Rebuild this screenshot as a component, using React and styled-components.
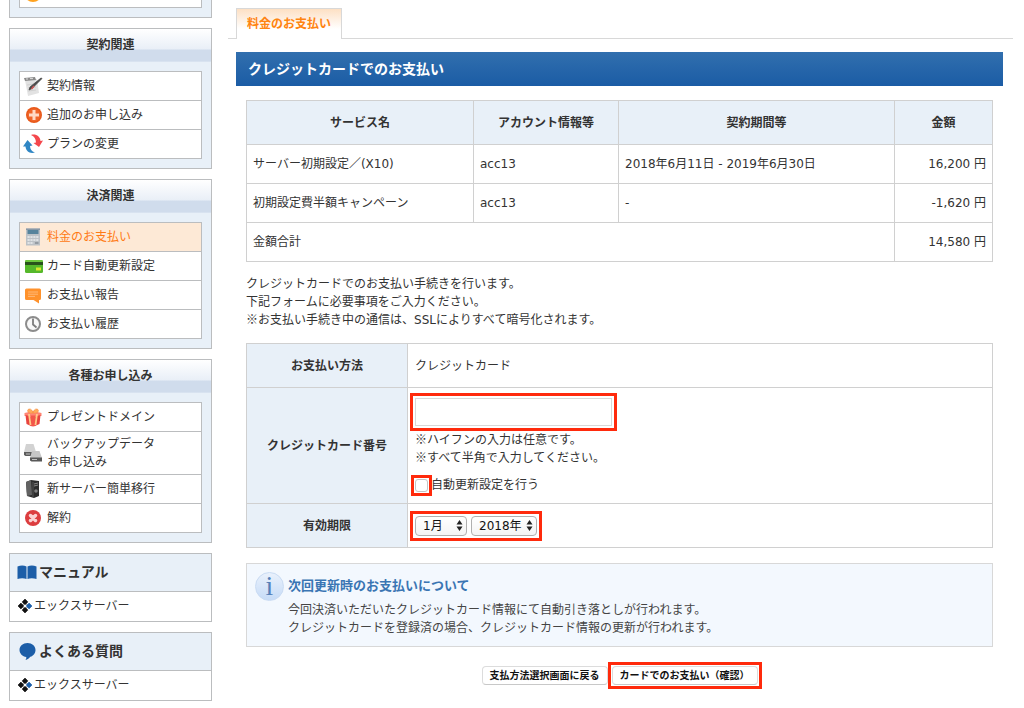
import React from "react";
import styled, { createGlobalStyle } from "styled-components";

const GlobalStyle = createGlobalStyle`
  *, *::before, *::after { box-sizing: border-box; }
  body {
    margin: 0;
    background: #fff;
    color: #333;
    font: 12px/18px "DejaVu Sans", "Noto Sans CJK JP", sans-serif;
  }
  a { color: inherit; text-decoration: none; }
  h1, h2, h3, p, ul { margin: 0; padding: 0; }
  ul { list-style: none; }
`;

const Highlight = styled.span`
  display: inline-flex;
  gap: 4px;
  margin: ${(p) => -3 - (p.$gap ?? 2)}px;
  padding: ${(p) => p.$gap ?? 2}px;
  border: 3px solid #ff2a0c;
  vertical-align: middle;
`;

const Page = styled.div`
  display: flex;
  gap: 16px;
  padding-right: 11px;
`;

/* ---------- sidebar ---------- */

const Sidebar = styled.aside`
  flex: 0 0 203px;
  display: flex;
  flex-direction: column;
  gap: 10px;
  margin-left: 9px;
`;

const Panel = styled.section`
  border: 1px solid #bbbdbf;
  background: #e8f0f8;
`;

const PanelTail = styled(Panel)`
  border-top: 0;
`;

const PanelTitle = styled.h2`
  height: 33px;
  font-size: 12px;
  line-height: 32px;
  text-align: center;
  background: linear-gradient(#ffffff 0, #e9eff7 20px, #d0dcec 21px, #d0dcec 32px, #e0e9f4 33px);
`;

const Menu = styled.ul`
  margin: 9px;
  border: 1px solid #bbbdbf;
  background: #fff;
`;

const MenuTail = styled(Menu)`
  margin-top: 0;
  border-top: 0;
`;

const MenuItem = styled.li`
  & + & { border-top: 1px solid #bbbdbf; }
`;

const MenuLink = styled.a`
  display: flex;
  align-items: center;
  gap: 4px;
  min-height: 28px;
  padding: 3px;
  color: ${(p) => (p.$active ? "#ff7a14" : "#333")};
  background: ${(p) => (p.$active ? "#fde9d6" : "#fff")};
`;

const MenuLinkTail = styled(MenuLink)`
  align-items: flex-end;
  min-height: 0;
  height: 7px;
  padding: 0 3px 4px;
  overflow: hidden;
`;

const Icon = styled.svg`
  flex: none;
  display: block;
  width: ${(p) => p.$size ?? 20}px;
  height: ${(p) => p.$size ?? 20}px;
`;

const GuideTitle = styled.h2`
  display: flex;
  align-items: center;
  gap: 2px;
  height: 37px;
  padding: 0 7px 2px;
  font-size: 14px;
  line-height: 20px;
`;

const GuideLink = styled.a`
  display: flex;
  align-items: center;
  gap: 2px;
  height: 30px;
  padding: 0 8px 2px;
  border-top: 1px solid #bbbdbf;
  background: #fff;
`;

/* ---------- main ---------- */

const Main = styled.main`
  flex: 1;
  min-width: 0;
  padding-top: 8px;
`;

const Tabs = styled.nav`
  display: flex;
  &::before, &::after {
    content: "";
    border-bottom: 1px solid #d8d8d8;
  }
  &::before { width: 8px; }
  &::after { flex: 1; }
`;

const Tab = styled.a`
  height: 31px;
  padding: 0 10px;
  border: 1px solid #d8d8d8;
  border-bottom: 0;
  color: #ff8410;
  font-weight: bold;
  line-height: 30px;
  background: linear-gradient(#fde0c4, #fff 20px);
`;

const Content = styled.div`
  padding: 13px 10px 0 8px;
`;

const PageTitle = styled.h1`
  height: 34px;
  padding-left: 12px;
  color: #fff;
  font-size: 14px;
  line-height: 34px;
  background: linear-gradient(#316fae, #1b5ca5);
`;

const Body = styled.div`
  padding: 14px 10px 0;
`;

const Table = styled.table`
  width: 100%;
  table-layout: fixed;
  border-collapse: collapse;
  th, td { border: 1px solid #d0d0d0; }
  th { background: #e8f0f8; text-align: center; }
`;

const Col = styled.col`
  width: ${(p) => p.$w};
`;

const HeadCell = styled.th`
  height: 44px;
  padding: 0;
`;

const Cell = styled.td`
  height: 39px;
  padding: 0 6px;
  text-align: ${(p) => (p.$right ? "right" : "left")};
`;

const Lead = styled.p`
  padding: 13px 0 14px;
`;

const Mark = styled.span`
  font-family: "Noto Sans CJK JP", sans-serif;
  line-height: 1;
`;

const FieldCell = styled.td`
  padding: ${(p) => p.$pad ?? "0 7px"};
`;

const FieldLine = styled.div`
  display: flex;
`;

const CardInput = styled.input`
  display: block;
  width: 197px;
  height: 28px;
  padding: 0 4px;
  border: 1px solid #d8d8d8;
  background: #fff;
  font: inherit;
`;

const Hint = styled.p`
  padding: 5px 0 9px;
`;

const CheckRow = styled.div`
  display: flex;
  align-items: center;
  gap: 3px;
  height: 18px;
`;

const Checkbox = styled.input`
  appearance: none;
  width: 13px;
  height: 13px;
  margin: 0;
  border: 1px solid #c4c4c4;
  border-radius: 3px;
  background: #fff;
`;

const SelectBox = styled.span`
  position: relative;
  display: block;
`;

const Select = styled.select`
  appearance: none;
  display: block;
  width: ${(p) => p.$w}px;
  height: 20px;
  padding: 0 0 0 7px;
  border: 1px solid #b0b0b0;
  border-radius: 4px;
  color: #111;
  background: linear-gradient(#fff, #f4f4f4);
  font: inherit;
`;

const Arrows = styled.svg`
  position: absolute;
  right: 4px;
  top: 4px;
  width: 7px;
  height: 11px;
  pointer-events: none;
`;

const Notice = styled.section`
  display: flex;
  gap: 4px;
  min-height: 84px;
  margin-top: 15px;
  padding: 8px;
  border: 1px solid #d8d8d8;
  background: #f3f8fe;
  color: #444;
`;

const InfoBadge = styled.span`
  flex: none;
  width: 29px;
  height: 29px;
  border: 1px solid #c9dbf3;
  border-radius: 50%;
  background: linear-gradient(#e9f1fc, #c6dbf7);
  color: #5580b8;
  font: 28px/26px "Liberation Serif", serif;
  text-align: center;
`;

const NoticeTitle = styled.h2`
  padding: 5px 0 6px;
  color: #3a75b3;
  font-size: 13px;
  line-height: 18px;
`;

const Actions = styled.div`
  display: flex;
  justify-content: center;
  gap: 4px;
  padding: 19px 0 24px;
`;

const Button = styled.button`
  height: 19px;
  padding: 0 7px;
  border: 1px solid #dcdcdc;
  border-bottom-color: #c8c8c8;
  border-radius: 4px;
  background: #fff;
  color: #111;
  font: bold 10px/16px "DejaVu Sans", "Noto Sans CJK JP", sans-serif;
`;

/* ---------- icons ---------- */

const icons = {
  coin: (
    <circle cx="10" cy="10" r="9" fill="#ffa21f" />
  ),
  contract: (
    <>
      <path d="M2 4l12-1 2 14-11 3z" fill="#e2e2e2" />
      <path d="M4 9l8-1M5 12l8-1M5 15l8-1" stroke="#cfcfcf" />
      <path d="M1 2l11-1 1 3-11 1z" fill="#8a8a8a" />
      <path d="M3 3h2M7 2.600h3" stroke="#ddd" />
      <path d="M19 2.500L9 12.500l-3 1.500 1-3L18 2z" fill="#4a4a4a" stroke="#4a4a4a" strokeWidth=".8" />
      <path d="M11 10l-2.500 3" stroke="#c55" strokeWidth="1.500" />
    </>
  ),
  plus: (
    <>
      <circle cx="11" cy="10" r="8" fill="#e8591a" />
      <circle cx="11" cy="10" r="6.500" fill="#f0662a" />
      <path d="M11 5v10M6 10h10" stroke="#ffd9c4" strokeWidth="3" />
    </>
  ),
  swap: (
    <>
      <path d="M8 1c5-1.500 9 1.500 9.500 6l2.500-.5-4 6.500-5.500-4 2.500-.6C12.800 5 11.500 2.500 8 1z" fill="#f4474c" />
      <path d="M12 18.500c-5 1.500-9-1-9.500-6H0l4.500-6.500 5 5.500-2.500.5c.2 3 1.500 5.500 5 6.500z" fill="#2f86c4" />
    </>
  ),
  calculator: (
    <>
      <rect x="3" y="1.500" width="14" height="17" fill="#bcc1c6" />
      <rect x="3" y="1.500" width="14" height="1.500" fill="#8898a6" />
      <rect x="4.500" y="3" width="11" height="4" fill="#56839c" />
      <path d="M4.500 10h11M4.500 13h11M4.500 16h6" stroke="#dfe2e5" strokeWidth="1.800" strokeDasharray="2.200 .7" />
      <path d="M12 16h3.500" stroke="#949ba2" strokeWidth="2" />
    </>
  ),
  card: (
    <>
      <rect x="2" y="4" width="18" height="13" rx="1.500" fill="#55b82b" />
      <path d="M2 9h18V5.500A1.500 1.500 0 0 0 18.500 4h-15A1.500 1.500 0 0 0 2 5.500z" fill="#6cc63d" />
      <rect x="2" y="6" width="18" height="3" fill="#28531b" />
      <rect x="13" y="11.500" width="5" height="3" fill="#d5e62d" />
    </>
  ),
  speech: (
    <>
      <path d="M3.500 3.500h13A1.500 1.500 0 0 1 18 5v8.500a1.500 1.500 0 0 1-1.500 1.500H16v3.500L10.500 15h-7A1.500 1.500 0 0 1 2 13.500V5a1.500 1.500 0 0 1 1.500-1.500z" fill="#ff922c" />
      <path d="M5 7h10M5 9.200h10M5 11.400h7" stroke="#ffb978" />
    </>
  ),
  clock: (
    <>
      <circle cx="10" cy="10" r="7" fill="#f8f8f8" stroke="#8c8c8c" strokeWidth="2" />
      <path d="M10 4.500V10.500l3.500 3" fill="none" stroke="#7c7c7c" strokeWidth="1.800" />
    </>
  ),
  gift: (
    <>
      <path d="M1.500 6L10 4l8.500 2v3h-17z" fill="#ff8574" />
      <path d="M2.500 8L8 9.500V19l-4.500-2zM17.500 8L12 9.500V19l4.500-2z" fill="#e8433e" />
      <path d="M7.500 8.500h5V19l-2.500.5-2.500-.5z" fill="#f3564a" />
      <path d="M6 7l1.500 11M14 7l-1.500 11" stroke="#ffc987" strokeWidth="1.800" />
      <path d="M10 6C5 7 3 3 6 2c2-.5 4 2 4 4zM10 6c5 1 7-3 4-4-2-.5-4 2-4 4z" fill="#ffa95c" stroke="#f5903f" strokeWidth=".6" />
    </>
  ),
  drives: (
    <>
      <path d="M3 1h7.500l2.500 8H1z" fill="#d2d2d2" />
      <path d="M1 9h12v4H2.500L1 12z" fill="#5c5c5c" />
      <path d="M9 8h7.500l2.500 7H7z" fill="#c6c6c6" />
      <path d="M7 14.500h12v4H8.500L7 17.500z" fill="#585858" />
      <path d="M3 11h4M9 16.500h5" stroke="#c0c0c0" />
    </>
  ),
  tower: (
    <>
      <path d="M3 3l5-2 8 1v15l-5 2-7-2z" fill="#2c2c2c" />
      <path d="M3 3l5-2 1 15-5 1z" fill="#626262" />
      <path d="M11 5l4-1M11 7l4-1" stroke="#888" />
      <circle cx="13" cy="12" r="1.800" fill="#808080" />
      <path d="M10 3v15" stroke="#555" />
    </>
  ),
  cancel: (
    <>
      <circle cx="10" cy="10" r="8" fill="#dc3d3f" />
      <path d="M7.500 7.500l5 5M12.500 7.500l-5 5" stroke="#fbd2d2" strokeWidth="3.500" strokeLinecap="round" />
    </>
  ),
  book: (
    <>
      <path d="M.5 4.500c3-1.200 6.500-1.200 9 0V17c-2.500-1-6-1-9 0z" fill="#1c5ea8" />
      <path d="M10.500 4.500c2.500-1.200 6-1.200 9 0V17c-3-1-6.500-1-9 0z" fill="#1c5ea8" />
    </>
  ),
  balloon: (
    <path d="M10.500 2C15 2 18.500 5 18.500 9c0 3-2 6-5.200 6.800-1 1.500-2.700 2.700-4.800 3.200.7-1 1-2 .8-3C5.500 15.500 2.500 12.500 2.500 9c0-4 3.500-7 8-7z" fill="#1c5ea8" />
  ),
  clover: (
    <>
      <path d="M7 3.500L10.500 7 7 10.500 3.500 7z" fill="#fff" stroke="#555" strokeWidth=".8" />
      <path d="M7 0l2.900 2.900L7 5.800 4.100 2.900z" fill="#111" stroke="#111" strokeWidth=".6" strokeLinejoin="round" />
      <path d="M2.900 4.100L5.800 7 2.900 9.900 0 7z" fill="#111" stroke="#111" strokeWidth=".6" strokeLinejoin="round" />
      <path d="M7 8.200l2.900 2.900L7 14l-2.900-2.900z" fill="#111" stroke="#111" strokeWidth=".6" strokeLinejoin="round" />
      <path d="M11.100 4.100L14 7l-2.900 2.900L8.200 7z" fill="#1c5ea8" stroke="#1c5ea8" strokeWidth=".6" strokeLinejoin="round" />
    </>
  ),
};

const Glyph = ({ name, size = 20, box = 20 }) => (
  <Icon $size={size} viewBox={`0 0 ${box} ${box}`} aria-hidden="true">
    {icons[name]}
  </Icon>
);

/* ---------- data ---------- */

const panels = [
  {
    title: "契約関連",
    items: [
      ["contract", "契約情報"],
      ["plus", "追加のお申し込み"],
      ["swap", "プランの変更"],
    ],
  },
  {
    title: "決済関連",
    items: [
      ["calculator", "料金のお支払い", true],
      ["card", "カード自動更新設定"],
      ["speech", "お支払い報告"],
      ["clock", "お支払い履歴"],
    ],
  },
  {
    title: "各種お申し込み",
    items: [
      ["gift", "プレゼントドメイン"],
      ["drives", <>バックアップデータ<br />お申し込み</>],
      ["tower", "新サーバー簡単移行"],
      ["cancel", "解約"],
    ],
  },
];

const guides = [
  ["book", "マニュアル"],
  ["balloon", "よくある質問"],
];

const services = [
  ["サーバー初期設定／(X10)", "acc13", "2018年6月11日 - 2019年6月30日", "16,200 円"],
  ["初期設定費半額キャンペーン", "acc13", "-", "-1,620 円"],
];

const Picker = ({ label, width, value }) => (
  <SelectBox>
    <Select $w={width} aria-label={label} defaultValue={value}>
      <option>{value}</option>
    </Select>
    <Arrows viewBox="0 0 7 11" aria-hidden="true">
      <path d="M3.500 0L6.500 4.500h-6zM3.500 11l-3-4.500h6z" fill="#222" />
    </Arrows>
  </SelectBox>
);

export default function App() {
  return (
    <Page>
      <GlobalStyle />
      <Sidebar>
        <PanelTail>
          <MenuTail>
            <li>
              <MenuLinkTail href="#">
                <Glyph name="coin" />
              </MenuLinkTail>
            </li>
          </MenuTail>
        </PanelTail>
        {panels.map((panel) => (
          <Panel key={panel.title}>
            <PanelTitle>{panel.title}</PanelTitle>
            <Menu>
              {panel.items.map(([icon, label, active]) => (
                <MenuItem key={icon}>
                  <MenuLink href="#" $active={active}>
                    <Glyph name={icon} />
                    <span>{label}</span>
                  </MenuLink>
                </MenuItem>
              ))}
            </Menu>
          </Panel>
        ))}
        {guides.map(([icon, title]) => (
          <Panel key={title}>
            <GuideTitle>
              <Glyph name={icon} />
              {title}
            </GuideTitle>
            <GuideLink href="#">
              <Glyph name="clover" size={14} box={14} />
              エックスサーバー
            </GuideLink>
          </Panel>
        ))}
      </Sidebar>

      <Main>
        <Tabs>
          <Tab href="#">料金のお支払い</Tab>
        </Tabs>
        <Content>
          <PageTitle>クレジットカードでのお支払い</PageTitle>
          <Body>
            <Table>
              <colgroup>
                <Col $w="227px" />
                <Col $w="145px" />
                <Col $w="auto" />
                <Col $w="98px" />
              </colgroup>
              <thead>
                <tr>
                  <HeadCell scope="col">サービス名</HeadCell>
                  <HeadCell scope="col">アカウント情報等</HeadCell>
                  <HeadCell scope="col">契約期間等</HeadCell>
                  <HeadCell scope="col">金額</HeadCell>
                </tr>
              </thead>
              <tbody>
                {services.map(([name, account, term, price]) => (
                  <tr key={name}>
                    <Cell>{name}</Cell>
                    <Cell>{account}</Cell>
                    <Cell>{term}</Cell>
                    <Cell $right>{price}</Cell>
                  </tr>
                ))}
                <tr>
                  <Cell colSpan={3}>金額合計</Cell>
                  <Cell $right>14,580 円</Cell>
                </tr>
              </tbody>
            </Table>

            <Lead>
              クレジットカードでのお支払い手続きを行います。<br />
              下記フォームに必要事項をご入力ください。<br />
              <Mark>※</Mark>お支払い手続き中の通信は、SSLによりすべて暗号化されます。
            </Lead>

            <form onSubmit={(e) => e.preventDefault()}>
              <Table>
                <colgroup>
                  <Col $w="161px" />
                  <Col $w="auto" />
                </colgroup>
                <tbody>
                  <tr>
                    <HeadCell scope="row">お支払い方法</HeadCell>
                    <FieldCell>クレジットカード</FieldCell>
                  </tr>
                  <tr>
                    <HeadCell scope="row">
                      <label htmlFor="card-number">クレジットカード番号</label>
                    </HeadCell>
                    <FieldCell $pad="10px 7px 9px">
                      <FieldLine>
                        <Highlight>
                          <CardInput id="card-number" type="text" />
                        </Highlight>
                      </FieldLine>
                      <Hint>
                        <Mark>※</Mark>ハイフンの入力は任意です。<br />
                        <Mark>※</Mark>すべて半角で入力してください。
                      </Hint>
                      <CheckRow>
                        <Highlight $gap={1}>
                          <Checkbox id="auto-renew" type="checkbox" />
                        </Highlight>
                        <label htmlFor="auto-renew">自動更新設定を行う</label>
                      </CheckRow>
                    </FieldCell>
                  </tr>
                  <tr>
                    <HeadCell scope="row">有効期限</HeadCell>
                    <FieldCell>
                      <FieldLine>
                        <Highlight>
                          <Picker label="有効期限（月）" width={52} value="1月" />
                          <Picker label="有効期限（年）" width={66} value="2018年" />
                        </Highlight>
                      </FieldLine>
                    </FieldCell>
                  </tr>
                </tbody>
              </Table>

              <Notice>
                <InfoBadge aria-hidden="true">i</InfoBadge>
                <div>
                  <NoticeTitle>次回更新時のお支払いについて</NoticeTitle>
                  <p>
                    今回決済いただいたクレジットカード情報にて自動引き落としが行われます。<br />
                    クレジットカードを登録済の場合、クレジットカード情報の更新が行われます。
                  </p>
                </div>
              </Notice>

              <Actions>
                <Button type="button">支払方法選択画面に戻る</Button>
                <Highlight $gap={1}>
                  <Button type="submit">カードでのお支払い（確認）</Button>
                </Highlight>
              </Actions>
            </form>
          </Body>
        </Content>
      </Main>
    </Page>
  );
}
